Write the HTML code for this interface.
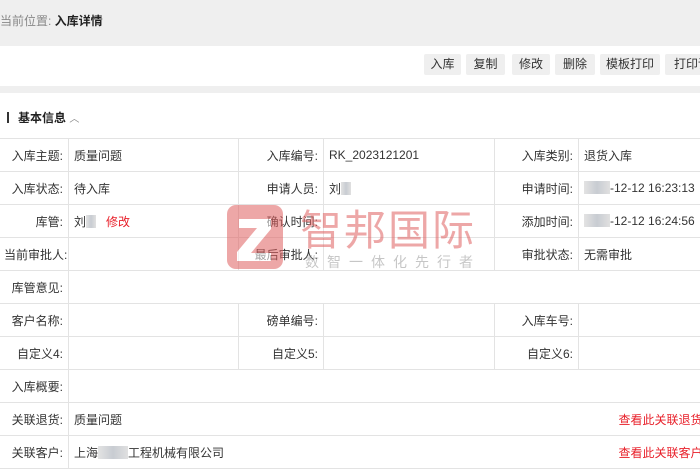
<!DOCTYPE html>
<html><head><meta charset="utf-8"><style>
*{margin:0;padding:0;box-sizing:border-box}
body{width:700px;height:465px;overflow:hidden;background:#fff;font-family:"Liberation Sans","Noto Sans CJK SC",sans-serif;font-size:12px;color:#333;position:relative}
.hdr{position:absolute;left:0;top:0;width:700px;height:46px;background:#efefef;line-height:42px;font-size:12px;color:#888}
.hdr b{color:#222;font-weight:bold}
.tb{position:absolute;top:54px;height:21px;background:#efefef;border-radius:2px;line-height:21px;text-align:center;color:#333}
.strip{position:absolute;left:0;top:86px;width:700px;height:7px;background:#efefef}
.sec{position:absolute;left:7px;top:109px;font-weight:bold;color:#222}
.sec i{display:inline-block;width:2px;height:11px;background:#333;vertical-align:-1px;margin-right:9px}
table{position:absolute;left:-2px;top:138px;border-collapse:collapse;width:760px;table-layout:fixed}
td{border:1px solid #e3e3e3;height:33px;padding:0 5px;white-space:nowrap;overflow:visible}
td.l{text-align:right;color:#333}
.red{color:#e8202a}
.blur{display:inline-block;width:26px;height:13px;background:linear-gradient(90deg,#e3e3e3,#c8ccd2,#e0e0e0);vertical-align:-2px}
.wm{position:absolute;left:225px;top:203px;width:260px;height:70px;pointer-events:none}
</style></head><body>
<div class="hdr">当前位置: <b>入库详情</b></div>
<div class="tb" style="left:424px;width:37px">入库</div>
<div class="tb" style="left:466px;width:39px">复制</div>
<div class="tb" style="left:512px;width:38px">修改</div>
<div class="tb" style="left:555px;width:40px">删除</div>
<div class="tb" style="left:600px;width:60px">模板打印</div>
<div class="tb" style="left:665px;width:50px;text-align:left;padding-left:9px">打印详</div>
<div class="strip"></div>
<div class="sec"><i></i>基本信息 <span style="font-weight:normal;color:#888;font-size:10px">︿</span></div>
<table>
<colgroup><col style="width:70px"><col style="width:170px"><col style="width:85px"><col style="width:171px"><col style="width:84px"><col style="width:180px"></colgroup>
<tr><td class="l">入库主题:</td><td>质量问题</td><td class="l">入库编号:</td><td>RK_2023121201</td><td class="l">入库类别:</td><td>退货入库</td></tr>
<tr><td class="l">入库状态:</td><td>待入库</td><td class="l">申请人员:</td><td>刘<span class="blur" style="width:10px"></span></td><td class="l">申请时间:</td><td><span class="blur"></span>-12-12 16:23:13</td></tr>
<tr><td class="l">库管:</td><td>刘<span class="blur" style="width:10px"></span> &nbsp; <span class="red">修改</span></td><td class="l">确认时间:</td><td></td><td class="l">添加时间:</td><td><span class="blur"></span>-12-12 16:24:56</td></tr>
<tr><td class="l">当前审批人:</td><td></td><td class="l">最后审批人:</td><td></td><td class="l">审批状态:</td><td>无需审批</td></tr>
<tr><td class="l">库管意见:</td><td colspan="5"></td></tr>
<tr><td class="l">客户名称:</td><td></td><td class="l">磅单编号:</td><td></td><td class="l">入库车号:</td><td></td></tr>
<tr><td class="l">自定义4:</td><td></td><td class="l">自定义5:</td><td></td><td class="l">自定义6:</td><td></td></tr>
<tr><td class="l">入库概要:</td><td colspan="5"></td></tr>
<tr><td class="l">关联退货:</td><td colspan="5">质量问题<span class="red" style="position:absolute;left:620px">查看此关联退货详情</span></td></tr>
<tr><td class="l">关联客户:</td><td colspan="5">上海<span class="blur" style="width:30px"></span>工程机械有限公司<span class="red" style="position:absolute;left:620px">查看此关联客户详情</span></td></tr>
</table>
<svg class="wm" viewBox="0 0 260 70" style="opacity:.55">
<rect x="2" y="2" width="56" height="64" rx="9" fill="#e06060"/>
<path d="M14 16h32v10L26 50h20v8H12v-9l20-24H14z" fill="#fff"/>
<text x="75" y="42" font-family="Noto Sans CJK SC,sans-serif" font-size="42" fill="#e06060" letter-spacing="2">智邦国际</text>
<text x="80" y="64" font-family="Noto Sans CJK SC,sans-serif" font-size="14" fill="#999" letter-spacing="8">数智一体化先行者</text>
</svg>
</body></html>
